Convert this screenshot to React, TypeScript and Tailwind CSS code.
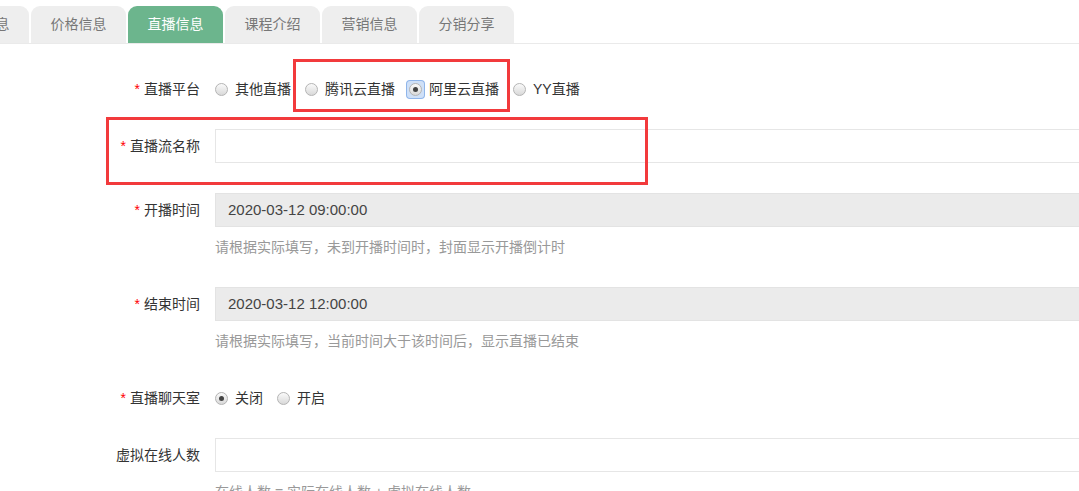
import React from 'react'

const tabs = ['基本信息', '价格信息', '直播信息', '课程介绍', '营销信息', '分销分享']
const active = '直播信息'

function Radio({ label, checked = false, focused = false }: { label: string; checked?: boolean; focused?: boolean }) {
  return (
    <label className="flex items-center">
      <span
        className={`flex h-[17px] w-[17px] items-center justify-center rounded-[3px] ${
          focused ? 'bg-[#cfe0f7] ring-1 ring-[#8fb5ea]' : ''
        }`}
      >
        <span className="flex h-[13px] w-[13px] items-center justify-center rounded-full border border-[#b4b4b4] bg-gradient-to-b from-[#fafafa] to-[#d9d9d9]">
          {checked && <span className="h-[5px] w-[5px] rounded-full bg-[#444]" />}
        </span>
      </span>
      <span className="ml-[5px] text-[14px] text-[#333]">{label}</span>
    </label>
  )
}

function Label({ text, required = true }: { text: string; required?: boolean }) {
  return (
    <div className="w-[200px] shrink-0 text-right text-[14px] leading-[20px] text-[#333]">
      {required && <span className="mr-[4px] text-[#f00]">*</span>}
      {text}
    </div>
  )
}

export default function App() {
  return (
    <div
      className="relative h-[491px] w-[1079px] overflow-hidden bg-white"
      style={{ fontFamily: '"Liberation Sans", "Noto Sans CJK SC", sans-serif' }}
    >
      {/* 标签栏 */}
      <div className="flex h-[44px] items-end border-b border-[#eaeaea]">
        <div className="ml-[-66px] flex gap-[2px]">
          {tabs.map((t) => (
            <div
              key={t}
              className={`flex h-[37px] w-[95px] items-center justify-center rounded-t-[9px] text-[14px] ${
                t === active ? 'bg-[#6cb58d] text-white' : 'bg-[#eeeeee] text-[#777]'
              }`}
            >
              {t}
            </div>
          ))}
        </div>
      </div>

      {/* 表单 */}
      <div className="flex flex-col pt-[28px]">
        <div className="flex h-[34px] items-center">
          <Label text="直播平台" />
          <div className="ml-[13px] flex items-center gap-[12px]">
            <Radio label="其他直播" />
            <Radio label="腾讯云直播" />
            <Radio label="阿里云直播" checked focused />
            <Radio label="YY直播" />
          </div>
        </div>

        <div className="mt-[23px] flex h-[34px] items-center">
          <Label text="直播流名称" />
          <div className="ml-[15px] mr-[-20px] h-[34px] flex-1 border border-[#e6e6e6]" />
        </div>

        <div className="mt-[30px] flex h-[34px] items-center">
          <Label text="开播时间" />
          <div className="ml-[15px] mr-[-20px] flex h-[34px] flex-1 items-center border border-[#e3e3e3] bg-[#ebebeb] pl-[12px] text-[15px] text-[#444]">
            2020-03-12 09:00:00
          </div>
        </div>
        <div className="ml-[215px] mt-[10px] text-[14px] leading-[20px] text-[#999]">
          请根据实际填写，未到开播时间时，封面显示开播倒计时
        </div>

        <div className="mt-[30px] flex h-[34px] items-center">
          <Label text="结束时间" />
          <div className="ml-[15px] mr-[-20px] flex h-[34px] flex-1 items-center border border-[#e3e3e3] bg-[#ebebeb] pl-[12px] text-[15px] text-[#444]">
            2020-03-12 12:00:00
          </div>
        </div>
        <div className="ml-[215px] mt-[10px] text-[14px] leading-[20px] text-[#999]">
          请根据实际填写，当前时间大于该时间后，显示直播已结束
        </div>

        <div className="mt-[30px] flex h-[34px] items-center">
          <Label text="直播聊天室" />
          <div className="ml-[13px] flex items-center gap-[12px]">
            <Radio label="关闭" checked />
            <Radio label="开启" />
          </div>
        </div>

        <div className="mt-[23px] flex h-[34px] items-center">
          <Label text="虚拟在线人数" required={false} />
          <div className="ml-[15px] mr-[-20px] h-[34px] flex-1 border border-[#e6e6e6]" />
        </div>
        <div className="ml-[215px] mt-[10px] text-[14px] leading-[20px] text-[#999]">
          在线人数 = 实际在线人数 + 虚拟在线人数
        </div>
      </div>

      {/* 标注框 */}
      <div className="pointer-events-none absolute left-[293px] top-[59px] h-[53px] w-[217px] border-[3px] border-[#f23a3c]" />
      <div className="pointer-events-none absolute left-[106px] top-[117px] h-[68px] w-[542px] border-[3px] border-[#f23a3c]" />
    </div>
  )
}
